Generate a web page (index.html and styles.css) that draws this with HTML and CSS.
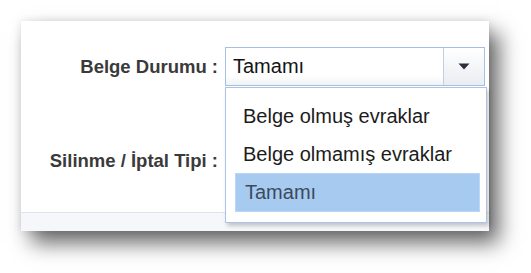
FILE: index.html
```html
<!DOCTYPE html>
<html lang="tr">
<head>
<meta charset="utf-8">
<title>Belge Durumu</title>
<link rel="stylesheet" href="styles.css">
</head>
<body>
<div class="stage">
  <div class="card">
    <div class="form">
      <label class="label">Belge Durumu :</label>
      <div class="combo">
        <div class="select">
          <span class="value">Tamamı</span>
          <span class="btn"><svg width="12" height="7" viewBox="0 0 12 7"><path d="M0.5 0.5 H11.5 L6 6.5 Z" fill="#27303c"/></svg></span>
        </div>
        <ul class="list">
          <li class="item">Belge olmuş evraklar</li>
          <li class="item">Belge olmamış evraklar</li>
          <li class="item selected">Tamamı</li>
        </ul>
      </div>
      <label class="label">Silinme / İptal Tipi :</label>
      <div class="cell"></div>
    </div>
    <div class="footer"></div>
  </div>
</div>
</body>
</html>
```
FILE: styles.css
```css
html, body {
  margin: 0;
  padding: 0;
  background: #ffffff;
}
body {
  font-family: "Liberation Sans", Arial, sans-serif;
}
.stage {
  width: 531px;
  height: 273px;
  padding: 21px 0 0 21px;
  box-sizing: border-box;
  background: #ffffff;
}
.card {
  position: relative;
  z-index: 1;
  width: 468px;
  height: 210px;
  background: #ffffff;
  display: flex;
  flex-direction: column;
  box-shadow: 10px 12px 20px 0 rgba(0, 0, 0, 0.6), 0 0 8px rgba(0, 0, 0, 0.1);
}
.form {
  flex: 1;
  display: grid;
  grid-template-columns: 197px 260px;
  grid-template-rows: 39px 39px;
  column-gap: 7px;
  row-gap: 55px;
  padding-top: 26px;
  box-sizing: border-box;
}
.label {
  font-weight: bold;
  font-size: 18.5px;
  color: #3a3a3a;
  text-align: right;
  align-self: center;
  white-space: nowrap;
}
.combo {
  position: relative;
}
.select {
  height: 39px;
  box-sizing: border-box;
  border: 1px solid #a6bfe2;
  display: flex;
  background: linear-gradient(#ffffff 75%, #f1f2f4);
}
.value {
  flex: 1;
  font-size: 20px;
  color: #141414;
  padding-left: 7px;
  line-height: 37px;
}
.btn {
  width: 40px;
  border-left: 1px solid #c4cfdd;
  background: linear-gradient(#ffffff, #e9edf2);
  display: flex;
  align-items: center;
  justify-content: center;
}
.list {
  position: absolute;
  top: 40px;
  left: 0;
  width: 262px;
  height: 136px;
  box-sizing: border-box;
  margin: 0;
  padding: 9px 6px 0 9px;
  list-style: none;
  background: #ffffff;
  border: 1px solid #abc3e6;
  box-shadow: 2px 3px 4px rgba(0, 0, 0, 0.2);
}
.item {
  height: 38px;
  line-height: 38px;
  font-size: 20px;
  color: #1c1c1c;
  padding-left: 8px;
  box-sizing: border-box;
  white-space: nowrap;
}
.item.selected {
  height: 39px;
  line-height: 37px;
  background: #a7cbf0;
  border: 1px solid #bcd6f6;
  color: #3b4a5e;
  padding-left: 9px;
}
.footer {
  height: 18px;
  background: #f5f7fa;
  border-top: 1px solid #dbe3ec;
}
```
